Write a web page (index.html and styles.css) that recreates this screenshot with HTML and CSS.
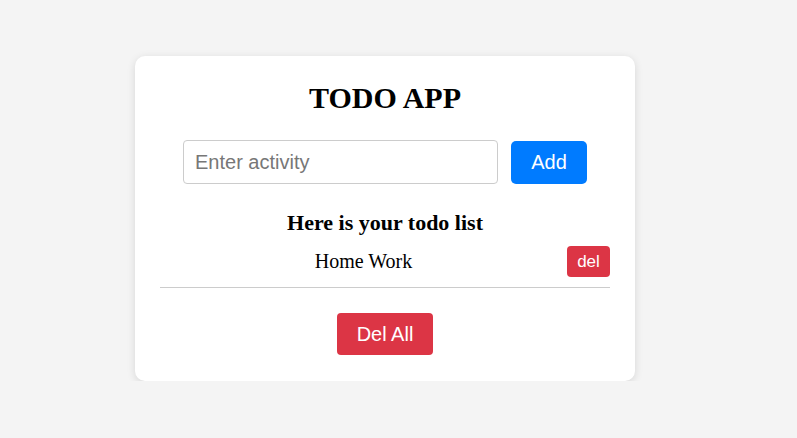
FILE: index.html
```html
<!DOCTYPE html>
<html>
<head>
<meta charset="utf-8">
<link rel="stylesheet" href="styles.css">
</head>
<body>
<div class="page">
  <div class="card">
    <h1 class="title">TODO APP</h1>
    <div class="entry">
      <input class="entry-input" type="text" placeholder="Enter activity">
      <button class="btn btn-add">Add</button>
    </div>
    <h2 class="list-title">Here is your todo list</h2>
    <ul class="list">
      <li class="item">
        <span class="item-text">Home Work</span>
        <button class="btn btn-del">del</button>
      </li>
    </ul>
    <div class="footer">
      <button class="btn btn-delall">Del All</button>
    </div>
  </div>
</div>
</body>
</html>
```
FILE: styles.css
```css
html, body {
  margin: 0;
  padding: 0;
  background: #f4f4f4;
  font-family: "Liberation Serif", "Times New Roman", serif;
}

.page {
  display: flex;
  justify-content: center;
  padding: 56px 27px 0 0;
}

.card {
  width: 500px;
  box-sizing: border-box;
  background: #fff;
  border-radius: 10px;
  box-shadow: 0 2px 8px rgba(0, 0, 0, 0.12);
  padding: 25px 25px 26px;
}

.title {
  margin: 0;
  font-size: 30px;
  font-weight: bold;
  text-align: center;
  line-height: 34px;
}

.entry {
  display: flex;
  justify-content: center;
  align-items: center;
  gap: 13px;
  margin-top: 25px;
}

.entry-input {
  width: 315px;
  height: 44px;
  box-sizing: border-box;
  border: 1px solid #ccc;
  border-radius: 4px;
  padding: 0 11px;
  font-family: "Liberation Sans", Arial, sans-serif;
  font-size: 20px;
  color: #333;
  outline: none;
}

.entry-input::placeholder {
  color: #777;
}

.btn {
  border: none;
  color: #fff;
  font-family: "Liberation Sans", Arial, sans-serif;
  border-radius: 4px;
  cursor: pointer;
  box-sizing: border-box;
}

.btn-add {
  width: 76px;
  height: 43px;
  background: #007bff;
  font-size: 20px;
  border-radius: 5px;
}

.list-title {
  margin: 26px 0 0;
  font-size: 22px;
  font-weight: bold;
  text-align: center;
  line-height: 25px;
}

.list {
  list-style: none;
  margin: 11px 0 0;
  padding: 0;
}

.item {
  display: flex;
  align-items: center;
  padding-bottom: 10px;
  border-bottom: 1px solid #ccc;
}

.item-text {
  flex: 1;
  text-align: center;
  font-size: 20px;
}

.btn-del {
  width: 43px;
  height: 31px;
  background: #dc3545;
  font-size: 17px;
  padding: 0;
}

.footer {
  display: flex;
  justify-content: center;
  margin-top: 25px;
}

.btn-delall {
  width: 96px;
  height: 42px;
  background: #dc3545;
  font-size: 20px;
  padding: 0;
}
```
